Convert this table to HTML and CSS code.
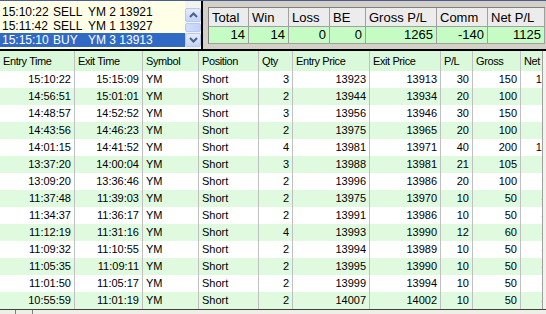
FILE: index.html
```html
<!DOCTYPE html>
<html>
<head>
<meta charset="utf-8">
<link rel="stylesheet" href="styles.css">
</head>
<body>
<div class="topline"></div>
<div class="top">
  <div class="list">
    <div class="items">
      <div class="item"><span class="t">15:10:22</span><span class="a">SELL</span><span>YM 2 13921</span></div>
      <div class="item"><span class="t">15:11:42</span><span class="a">SELL</span><span>YM 1 13927</span></div>
      <div class="item sel"><span class="t">15:15:10</span><span class="a">BUY</span><span>YM 3 13913</span></div>
    </div>
    <div class="sbar">
      <div class="sbtn"><svg width="9" height="6" viewBox="0 0 9 6"><path d="M1 5 L4.5 1.5 L8 5" fill="none" stroke="#4d6185" stroke-width="2"/></svg></div>
      <div class="thumb"></div>
      <div class="sbtn"><svg width="9" height="6" viewBox="0 0 9 6"><path d="M1 1 L4.5 4.5 L8 1" fill="none" stroke="#4d6185" stroke-width="2"/></svg></div>
    </div>
  </div>
  <div class="vsplit"></div>
  <div class="panel">
    <div class="sum">
      <div class="h">Total</div><div class="h">Win</div><div class="h">Loss</div><div class="h">BE</div><div class="h">Gross P/L</div><div class="h">Comm</div><div class="h">Net P/L</div>
      <div class="v">14</div><div class="v">14</div><div class="v">0</div><div class="v">0</div><div class="v">1265</div><div class="v">-140</div><div class="v">1125</div>
    </div>
  </div>
</div>
<div class="hsplit"></div>
<div class="grid-area">
  <div class="grid">
    <div class="row hdr"><div>Entry Time</div><div>Exit Time</div><div>Symbol</div><div>Position</div><div>Qty</div><div>Entry Price</div><div>Exit Price</div><div>P/L</div><div>Gross</div><div>Net P/L</div></div>
    <div class="row"><div class="n">15:10:22</div><div class="n">15:15:09</div><div>YM</div><div>Short</div><div class="n">3</div><div class="n">13923</div><div class="n">13913</div><div class="n">30</div><div class="n">150</div><div class="n">138</div></div>
    <div class="row g"><div class="n">14:56:51</div><div class="n">15:01:01</div><div>YM</div><div>Short</div><div class="n">2</div><div class="n">13944</div><div class="n">13934</div><div class="n">20</div><div class="n">100</div><div class="n">92</div></div>
    <div class="row"><div class="n">14:48:57</div><div class="n">14:52:52</div><div>YM</div><div>Short</div><div class="n">3</div><div class="n">13956</div><div class="n">13946</div><div class="n">30</div><div class="n">150</div><div class="n">98</div></div>
    <div class="row g"><div class="n">14:43:56</div><div class="n">14:46:23</div><div>YM</div><div>Short</div><div class="n">2</div><div class="n">13975</div><div class="n">13965</div><div class="n">20</div><div class="n">100</div><div class="n">92</div></div>
    <div class="row"><div class="n">14:01:15</div><div class="n">14:41:52</div><div>YM</div><div>Short</div><div class="n">4</div><div class="n">13981</div><div class="n">13971</div><div class="n">40</div><div class="n">200</div><div class="n">184</div></div>
    <div class="row g"><div class="n">13:37:20</div><div class="n">14:00:04</div><div>YM</div><div>Short</div><div class="n">3</div><div class="n">13988</div><div class="n">13981</div><div class="n">21</div><div class="n">105</div><div class="n">93</div></div>
    <div class="row"><div class="n">13:09:20</div><div class="n">13:36:46</div><div>YM</div><div>Short</div><div class="n">2</div><div class="n">13996</div><div class="n">13986</div><div class="n">20</div><div class="n">100</div><div class="n">92</div></div>
    <div class="row g"><div class="n">11:37:48</div><div class="n">11:39:03</div><div>YM</div><div>Short</div><div class="n">2</div><div class="n">13975</div><div class="n">13970</div><div class="n">10</div><div class="n">50</div><div class="n">42</div></div>
    <div class="row"><div class="n">11:34:37</div><div class="n">11:36:17</div><div>YM</div><div>Short</div><div class="n">2</div><div class="n">13991</div><div class="n">13986</div><div class="n">10</div><div class="n">50</div><div class="n">42</div></div>
    <div class="row g"><div class="n">11:12:19</div><div class="n">11:31:16</div><div>YM</div><div>Short</div><div class="n">4</div><div class="n">13993</div><div class="n">13990</div><div class="n">12</div><div class="n">60</div><div class="n">44</div></div>
    <div class="row"><div class="n">11:09:32</div><div class="n">11:10:55</div><div>YM</div><div>Short</div><div class="n">2</div><div class="n">13994</div><div class="n">13989</div><div class="n">10</div><div class="n">50</div><div class="n">42</div></div>
    <div class="row g"><div class="n">11:05:35</div><div class="n">11:09:11</div><div>YM</div><div>Short</div><div class="n">2</div><div class="n">13995</div><div class="n">13990</div><div class="n">10</div><div class="n">50</div><div class="n">42</div></div>
    <div class="row"><div class="n">11:01:50</div><div class="n">11:05:17</div><div>YM</div><div>Short</div><div class="n">2</div><div class="n">13999</div><div class="n">13994</div><div class="n">10</div><div class="n">50</div><div class="n">42</div></div>
    <div class="row g"><div class="n">10:55:59</div><div class="n">11:01:19</div><div>YM</div><div>Short</div><div class="n">2</div><div class="n">14007</div><div class="n">14002</div><div class="n">10</div><div class="n">50</div><div class="n">42</div></div>
  </div>
  <div class="rstrip"></div>
</div>
<div class="bottom"><div class="hbtn"></div><div class="hthumb"></div></div>
</body>
</html>
```
FILE: styles.css
```css
html, body {
  margin: 0;
  padding: 0;
}
body {
  width: 546px;
  height: 314px;
  overflow: hidden;
  background: #d4d0c8;
  font-family: "Liberation Sans", Arial, sans-serif;
  color: #000;
}
.topline {
  height: 1px;
  background: #4a5e94;
}
.top {
  display: flex;
  height: 48px;
}
.list {
  width: 201px;
  flex: none;
  background: #ffffe8;
  display: flex;
}
.items {
  flex: 1;
  padding-top: 4px;
  font-size: 12px;
}
.item {
  display: flex;
  height: 14px;
  line-height: 14px;
  padding-left: 2px;
  white-space: nowrap;
}
.item .t { width: 51px; }
.item .a { width: 35px; }
.item.sel {
  background: #316ac5;
  color: #fff;
}
.sbar {
  width: 16px;
  display: flex;
  flex-direction: column;
  gap: 1px;
  padding-top: 7px;
  background: #f3f3ee;
}
.sbtn {
  height: 12px;
  border: 1px solid #b6c9f2;
  border-radius: 2px;
  background: linear-gradient(#e4ecfd, #c4d4f8);
  display: flex;
  align-items: center;
  justify-content: center;
}
.thumb {
  height: 7px;
  border: 1px solid #b6c9f2;
  border-radius: 2px;
  background: linear-gradient(90deg, #d2defb, #c1d2f7);
}
.vsplit {
  width: 2px;
  flex: none;
  background: #000;
}
.panel {
  flex: 1;
  min-width: 0;
  padding: 6px 0 0 5px;
  overflow: hidden;
}
.sum {
  display: grid;
  grid-template-columns: 40px 40px 41px 36px 71px 51px 57px;
  width: max-content;
  border-top: 1px solid #808080;
  border-left: 1px solid #808080;
  font-size: 13px;
}
.sum .h {
  height: 19px;
  line-height: 20px;
  padding-left: 3px;
  background: #ececec;
  border-right: 1px solid #a0a0a0;
  border-bottom: 1px solid #a0a0a0;
  box-sizing: border-box;
  white-space: nowrap;
  overflow: hidden;
}
.sum .v {
  height: 17px;
  line-height: 16px;
  padding-right: 3px;
  text-align: right;
  background: #c4fcc4;
  border-right: 1px solid #a0a0a0;
  border-bottom: 1px solid #a0a0a0;
  box-sizing: border-box;
}
.hsplit {
  height: 2px;
  background: #000;
}
.grid-area {
  display: flex;
  height: 258px;
}
.grid {
  width: 542px;
  flex: none;
  overflow: hidden;
  background: #fff;
  border-right: 1px solid #a0a0a0;
}
.rstrip {
  flex: 1;
  background: #f2f2ee;
}
.row {
  display: grid;
  grid-template-columns: 75px 68px 56px 60px 34px 77px 71px 32px 48px 37px;
  width: 558px;
  height: 17px;
  font-size: 11px;
  line-height: 17px;
}
.row > div {
  border-right: 1px solid #c0c0c0;
  padding: 0 3px;
  white-space: nowrap;
  overflow: hidden;
  box-sizing: border-box;
}
.row .n {
  text-align: right;
}
.row.g {
  background: #dffadf;
}
.row.hdr {
  height: 20px;
  line-height: 21px;
  background: #daf8da;
  letter-spacing: -0.4px;
}
.bottom {
  height: 4px;
  border-top: 1px solid #404040;
  background: #efeee7;
  display: flex;
}
.hbtn {
  width: 15px;
  border-right: 1px solid #808080;
}
.hthumb {
  width: 16px;
  border-right: 1px solid #808080;
}
```
